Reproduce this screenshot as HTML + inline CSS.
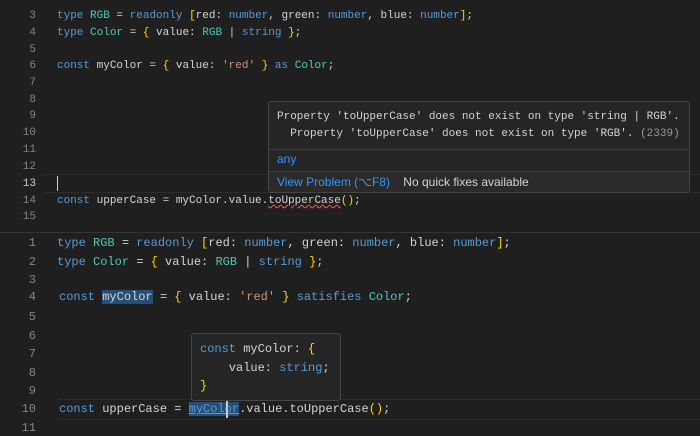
<!DOCTYPE html>
<html><head><style>
body{margin:0;width:700px;height:436px;background:#1f1f1f;overflow:hidden;position:relative;font-family:"Liberation Mono",monospace;font-size:11px;color:#d4d4d4}
.l{position:absolute;left:57px;white-space:pre;line-height:14px}
.n{position:absolute;width:36px;text-align:right;left:0;color:#858585;line-height:14px}
.bt .l,.bt .n{font-size:12px;line-height:15px}
.k{color:#569cd6}.t{color:#4ec9b0}.s{color:#ce9178}.b{color:#ffd700}
.hv{position:absolute;background:#252526;border:1px solid #454545;border-radius:3px}
.sans{font-family:"Liberation Sans",sans-serif}
</style></head><body>
<div class="n" style="top:9px">3</div><div class="l" style="top:9px"><span class="k">type</span> <span class="t">RGB</span> = <span class="k">readonly</span> <span class="b">[</span>red: <span class="k">number</span>, green: <span class="k">number</span>, blue: <span class="k">number</span><span class="b">]</span>;</div>
<div class="n" style="top:26px">4</div><div class="l" style="top:26px"><span class="k">type</span> <span class="t">Color</span> = <span class="b">{</span> value: <span class="t">RGB</span> | <span class="k">string</span> <span class="b">}</span>;</div>
<div class="n" style="top:43px">5</div>
<div class="n" style="top:59px">6</div><div class="l" style="top:59px"><span class="k">const</span> myColor = <span class="b">{</span> value: <span class="s">'red'</span> <span class="b">}</span> <span class="k">as</span> <span class="t">Color</span>;</div>
<div class="n" style="top:76px">7</div>
<div class="n" style="top:93px">8</div>
<div class="n" style="top:109px">9</div>
<div class="n" style="top:126px">10</div>
<div class="n" style="top:143px">11</div>
<div class="n" style="top:160px">12</div>
<div style="position:absolute;left:44px;right:0;top:174px;height:17px;border-top:1px solid #2c2c2c;border-bottom:1px solid #2c2c2c"></div>
<div class="n" style="top:177px;color:#ccc">13</div>
<div style="position:absolute;left:57px;top:176px;width:1px;height:15px;background:#ccc"></div>
<div class="n" style="top:194px">14</div><div class="l" style="top:194px"><span class="k">const</span> upperCase = myColor.value.<span style="text-decoration:underline wavy #f14c4c">toUpperCase</span><span class="b">()</span>;</div>
<div class="n" style="top:210px">15</div>
<div class="hv" style="left:268px;top:101px;width:420px;height:90px">
<div style="position:absolute;left:8px;top:7px;white-space:pre;line-height:17px;font-size:11px">Property 'toUpperCase' does not exist on type 'string | RGB'.
  Property 'toUpperCase' does not exist on type 'RGB'. <span style="color:#999">(2339)</span></div>
<div style="position:absolute;left:0;right:0;top:47px;border-top:1px solid #3c3c3c"></div>
<div class="sans" style="position:absolute;left:8px;top:50px;color:#3794ff;font-size:12px">any</div>
<div style="position:absolute;left:0;right:0;top:69px;bottom:0;border-top:1px solid #3c3c3c;background:#2a2a2b"></div>
<div class="sans" style="position:absolute;left:8px;top:73px;font-size:12px;white-space:pre"><span style="color:#3794ff">View Problem (⌥F8)</span>    No quick fixes available</div>
</div>
<div style="position:absolute;left:0;right:0;top:232px;border-top:1px solid #333"></div>
<div class="bt">
<div class="n" style="top:236px">1</div><div class="l" style="top:236px"><span class="k">type</span> <span class="t">RGB</span> = <span class="k">readonly</span> <span class="b">[</span>red: <span class="k">number</span>, green: <span class="k">number</span>, blue: <span class="k">number</span><span class="b">]</span>;</div>
<div class="n" style="top:255px">2</div><div class="l" style="top:255px"><span class="k">type</span> <span class="t">Color</span> = <span class="b">{</span> value: <span class="t">RGB</span> | <span class="k">string</span> <span class="b">}</span>;</div>
<div class="n" style="top:273px">3</div>
<div class="n" style="top:290px">4</div><div class="l" style="top:290px;left:59px"><span class="k">const</span> <span style="background:#264f78">myColor</span> = <span class="b">{</span> value: <span class="s">'red'</span> <span class="b">}</span> <span class="k">satisfies</span> <span class="t">Color</span>;</div>
<div class="n" style="top:310px">5</div>
<div class="n" style="top:329px">6</div>
<div class="n" style="top:347px">7</div>
<div class="n" style="top:366px">8</div>
<div class="n" style="top:384px">9</div>
<div style="position:absolute;left:58px;right:0;top:399px;height:19px;border-top:1px solid #2c2c2c;border-bottom:1px solid #2c2c2c"></div>
<div class="n" style="top:402px">10</div><div class="l" style="top:402px;left:59px"><span class="k">const</span> upperCase = <span style="background:#264f78;color:#569cd6;text-decoration:underline">myColor</span>.value.toUpperCase<span class="b">()</span>;</div>
<div style="position:absolute;left:226px;top:401px;width:2px;height:17px;background:#ccc"></div>
<div class="n" style="top:421px">11</div>
</div>
<div class="hv" style="left:191px;top:333px;width:148px;height:66px">
<div style="position:absolute;left:8px;top:6px;white-space:pre;line-height:18.5px;font-size:12px"><span class="k">const</span> myColor: <span class="b">{</span>
    value: <span class="k">string</span>;
<span class="b">}</span></div>
</div>
</body></html>
